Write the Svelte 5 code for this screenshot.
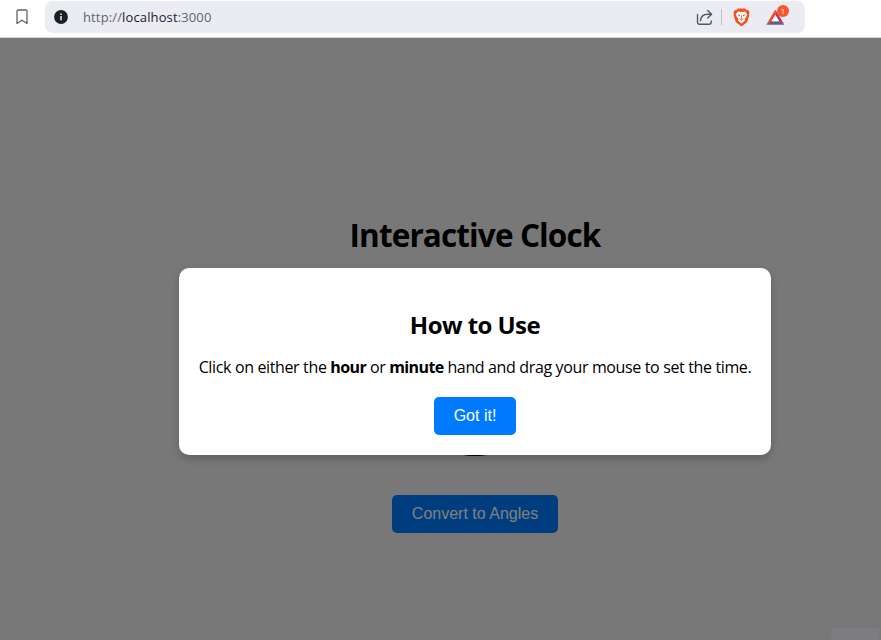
<script>
  let open = $state(true);
</script>

<div class="window">
  <header>
    <svg class="bookmark" width="12" height="16" viewBox="0 0 12 16"><path d="M1 2.2Q1 1 2.2 1H9.8Q11 1 11 2.2V14.5L6 11.2L1 14.5Z" fill="none" stroke="#60636b" stroke-width="1.3" stroke-linejoin="round" /></svg>
    <div class="address">
      <svg class="info" width="14" height="14" viewBox="0 0 14 14"><circle cx="7" cy="7" r="6.9" fill="#1d1e22" /><path d="M7 3.4V5M7 6.1V10.3" stroke="#e4e5eb" stroke-width="1.6" /></svg>
      <span class="url"><i>http://</i>localhost<i>:3000</i></span>
      <svg class="share" width="18" height="17" viewBox="0 0 18 17"><path d="M1.5 5.5V13Q1.5 15.3 3.8 15.3H13Q15.2 15.3 15.2 13V12M4.5 11.8Q5 5.2 11.8 5.2H15.5M11.7 1.5L15.6 5.2L11.7 9" fill="none" stroke="#55585f" stroke-width="1.4" stroke-linecap="round" stroke-linejoin="round" /></svg>
      <b class="divider"></b>
      <svg class="lion" width="17" height="19" viewBox="0 0 17 19">
        <path d="M5 .6H12L13.4 2.1L15.2 2L16.6 4.5L16 6.2L16.3 7.5L14.1 14.2L8.5 18.4L2.9 14.2L.7 7.5L1 6.2L.4 4.5L1.8 2L3.6 2.1Z" fill="#f6501f" />
        <path d="M5.1 3.4L8.5 4L11.9 3.4L14.2 6.3L13.3 8.8L11.6 11.1L12 12.4L8.5 15.5L5 12.4L5.4 11.1L3.7 8.8L2.8 6.3Z" fill="#fff" />
        <path d="M4.3 6.5L7.3 7.1L6.6 8.4ZM12.7 6.5L9.7 7.1L10.4 8.4ZM7 11.1L8.5 11.8L10 11.1L8.5 12.8Z" fill="#f6501f" />
        <path d="M8.5 7.4V10.8M6.5 10.7L8.5 11.5L10.5 10.7" fill="none" stroke="#f6501f" stroke-width=".8" />
      </svg>
      <div class="rewards">
        <svg width="20" height="17" viewBox="0 0 20 17"><path d="M9.3 .5L.2 15.8L5.6 12.5L9.5 6Z" fill="#fa4e20" /><path d="M9.3 .5L18.4 15.8L13 12.5L9.3 6Z" fill="#b43c58" /><path d="M.2 15.8H18.4L13.4 12.2H5.3Z" fill="#665d87" /><path d="M9.4 6L13.2 12.3H5.5Z" fill="#fff" /></svg>
        <span class="badge">1</span>
      </div>
    </div>
  </header>

  <main>
    <div class="page">
      <h1>Interactive Clock</h1>
      <div class="clock"></div>
      <button class="convert">Convert to Angles</button>
    </div>
    {#if open}
      <div class="overlay">
        <section class="modal">
          <h2>How to Use</h2>
          <p>Click on either the <strong>hour</strong> or <strong>minute</strong> hand and drag your mouse to set the time.</p>
          <button onclick={() => (open = false)}>Got it!</button>
        </section>
      </div>
    {/if}
    <div class="corner"></div>
  </main>
</div>

<style>
  :global(body) { margin: 0; }
  .window { width: 881px; height: 640px; overflow: hidden; display: flex; flex-direction: column; background: #fff; font-family: "Segoe UI", "Open Sans", "Noto Sans", sans-serif; color: #000; }
  header { box-sizing: border-box; height: 38px; flex: none; display: flex; align-items: flex-start; padding: 1px 0 0 16px; border-bottom: 1px solid #d7d7d7; }
  svg { display: block; flex: none; }
  .bookmark { margin-top: 8px; }
  .address { box-sizing: border-box; margin-left: 17px; width: 760px; height: 32px; border-radius: 8px; background: #ebecf2; display: flex; align-items: center; padding-left: 9px; }
  .url { margin-left: 15px; flex: 1; font-size: 13px; letter-spacing: .13px; line-height: 18px; color: #202228; }
  .url i { font-style: normal; color: #62656d; }
  .divider { width: 1px; height: 16px; margin: 0 11px 0 7px; background: #bfc1c8; }
  .rewards { position: relative; margin: 1px 19px 0 16px; }
  .badge { position: absolute; left: 11px; top: -4px; width: 12px; height: 12px; border-radius: 50%; background: #fb542b; color: #fff; font-size: 8px; line-height: 12px; text-align: center; }
  main { position: relative; flex: 1; min-height: 0; overflow: hidden; background: #f0f0f0; }
  .page { width: 950px; display: flex; flex-direction: column; align-items: center; padding-top: 175px; }
  h1, h2, p { margin: 0; white-space: nowrap; }
  h1 { font-size: 31.5px; line-height: 43px; letter-spacing: -.88px; }
  .clock { box-sizing: border-box; width: 156px; height: 156px; margin-top: 44px; border: 4px solid #000; border-radius: 50%; background: #fff; }
  button { font: 16px/18px "Liberation Sans", Arial, sans-serif; height: 38px; padding: 10px 20px; border: 0; border-radius: 5px; background: #007bff; color: #fff; white-space: nowrap; }
  .convert { margin-top: 39px; }
  .overlay { position: absolute; inset: 0; background: rgba(0, 0, 0, .5); }
  .modal { box-sizing: border-box; width: 592px; height: 187px; margin: 230px 0 0 179px; padding-top: 41px; border-radius: 10px; background: #fff; box-shadow: 0 4px 8px rgba(0, 0, 0, .2); display: flex; flex-direction: column; align-items: center; }
  h2 { font-size: 24px; line-height: 32px; letter-spacing: -.55px; }
  p { margin: 16px 0 19px; font-size: 16px; line-height: 21px; letter-spacing: -.36px; }
  strong { letter-spacing: -.6px; }
  .corner { position: absolute; right: 2px; bottom: 0; width: 48px; height: 12px; background: #7c7d80; }
</style>
